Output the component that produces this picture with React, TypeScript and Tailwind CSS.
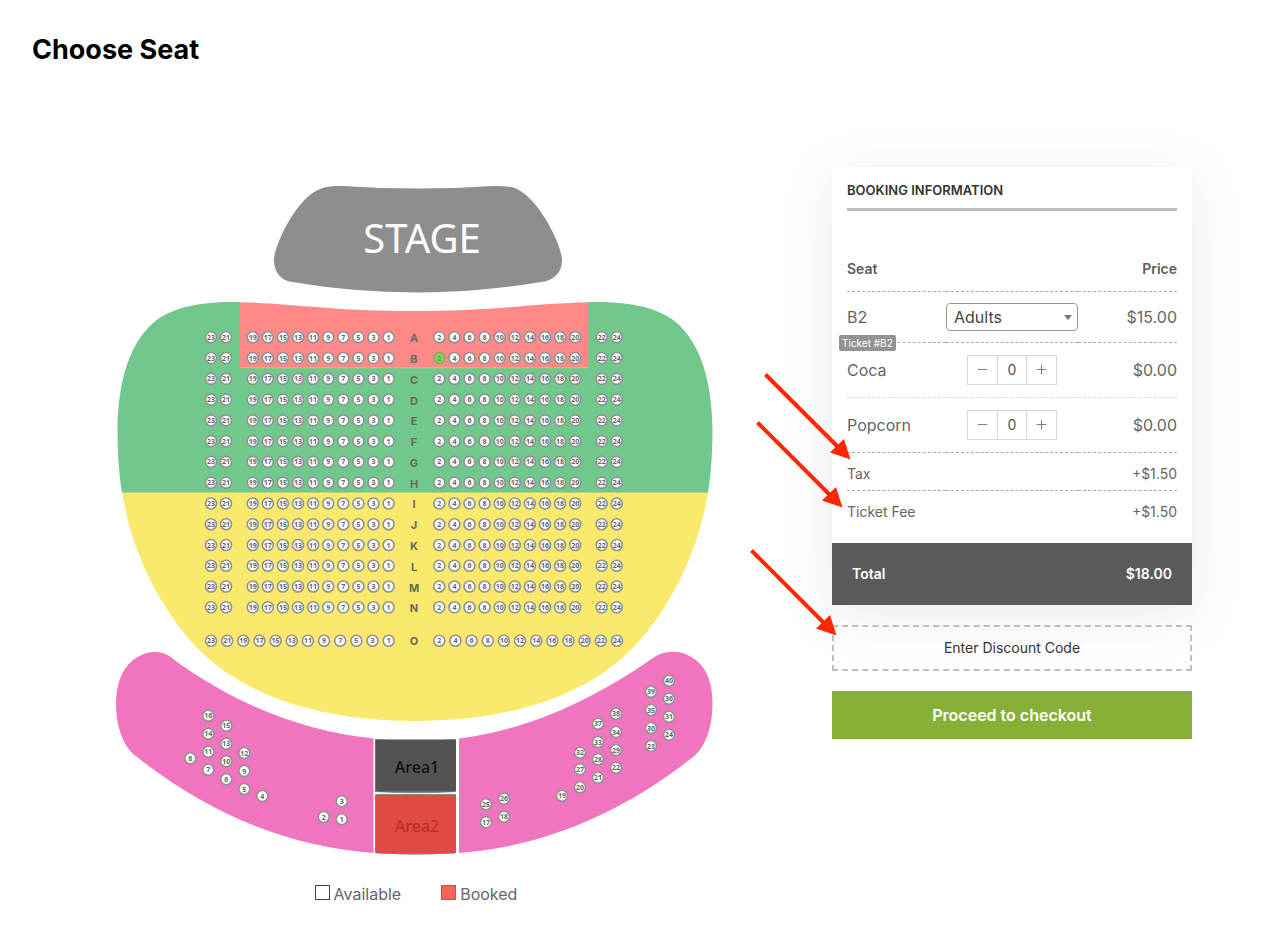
import React, { useState } from 'react';
import { Minus, Plus } from 'lucide-react';

const ROWS = ['A', 'B', 'C', 'D', 'E', 'F', 'G', 'H', 'I', 'J', 'K', 'L', 'M', 'N'];
const ODD = [19, 17, 15, 13, 11, 9, 7, 5, 3, 1];
const EVEN = [2, 4, 6, 8, 10, 12, 14, 16, 18, 20];
const LAST_ROW_Y = 460.7;

// [number, x, y] of the seats on the balcony wings
const BALCONY: [number, number, number][] = [
  [1, 231.7, 639.3], [2, 213.7, 637], [3, 231.7, 621.3], [4, 152.3, 616],
  [5, 134.3, 609], [6, 116.3, 599.3], [7, 98.3, 589.7], [8, 80.3, 578.3],
  [9, 134.3, 591], [10, 116.3, 581.3], [11, 98.3, 571.7], [12, 134.3, 573],
  [13, 116.3, 563.7], [14, 98.3, 553.7], [15, 116.3, 545.7], [16, 98.3, 535.7],
  [17, 376, 642.3], [18, 394, 636.7], [19, 452, 615.7], [20, 470, 607.3],
  [21, 488, 597.7], [22, 506, 587.7], [23, 541, 566], [24, 559, 554.7],
  [25, 376, 624.3], [26, 394, 618.7], [27, 470, 589.3], [28, 488, 579.3],
  [29, 506, 570], [30, 541, 548], [31, 559, 536.7], [32, 470, 572.7],
  [33, 488, 562], [34, 506, 552], [35, 541, 530], [36, 559, 518.7],
  [37, 488, 543.7], [38, 506, 533.7], [39, 541, 511.7], [40, 559, 500.7],
];

interface SeatProps {
  x: number;
  y: number;
  n: number;
  selected?: boolean;
}

function Seat({ x, y, n, selected }: SeatProps) {
  return (
    <g>
      <circle
        cx={x}
        cy={y}
        r={5.5}
        strokeWidth={1.6}
        className={selected ? 'fill-[#97c863] stroke-[#7db352]' : 'fill-white stroke-[#929292]'}
      />
      <text
        x={x}
        y={y + 2.5}
        textAnchor="middle"
        className={selected ? 'text-[7px] font-bold fill-[#6f9b48]' : 'text-[7px] font-bold fill-[#666666]'}
      >
        {n}
      </text>
    </g>
  );
}

function RowLabel({ y, label }: { y: number; label: string }) {
  return (
    <text x={304} y={y + 5} textAnchor="middle" className="font-['Inter'] text-[11px] font-bold fill-[#666b60]">
      {label}
    </text>
  );
}

function SeatMap() {
  return (
    <svg
      viewBox="0 0 612 680"
      role="img"
      aria-label="Seat map"
      className="w-full max-w-[612px] font-['Noto_Sans',sans-serif]"
    >
      <path
        className="fill-[#8e8e8e]"
        d="M233 6 Q308 11 383 6 C395 6 402 6.5 407 9 C430 20 452 66 452 80 C452 95 441 101 431 102 Q308 123 182 102 C172 101 164 93 164 80 C164 66 186 18 210 9 C215 6.5 222 6 233 6 Z"
      />
      <text x={312} y={73} textAnchor="middle" className="text-[40px] fill-white">STAGE</text>

      <path
        className="fill-[#f9e96d]"
        d="M12 312 C21 368 45 419 79 459 C128 516 210 541 305 541 C400 541 482 516 531 459 C565 419 589 368 598 312 Z"
      />
      <path
        className="fill-[#71c88c]"
        d="M130 122 C92 121 60 127 42 144 C20 164 8 200 7.5 250 C7.5 280 10 300 12 312.5 L598 312.5 C600 300 602.5 280 602.5 250 C602 200 590 164 568 144 C550 127 518 121 478 122 L478 187 L130 187 Z"
      />
      <path className="fill-[#ff8889]" d="M129.5 122.3 C180 123 220 131 303 131 C386 131 430 123 478.5 122.3 L478.5 187.5 L129.5 187.5 Z" />
      <path className="fill-none stroke-[#b5cd8b]" d="M129.5 187.8 H478.5" />

      {ROWS.map((row, r) => {
        const y = 157.3 + r * 20.77;
        return (
          <g key={row}>
            <Seat x={101} y={y} n={23} />
            <Seat x={116} y={y} n={21} />
            {ODD.map((n, i) => <Seat key={n} x={142.7 + i * 15.1} y={y} n={n} />)}
            <RowLabel y={y} label={row} />
            {EVEN.map((n, i) => (
              <Seat key={n} x={329.3 + i * 15.1} y={y} n={n} selected={row === 'B' && n === 2} />
            ))}
            <Seat x={491.7} y={y} n={22} />
            <Seat x={506.7} y={y} n={24} />
          </g>
        );
      })}

      {[23, 21, ...ODD].map((n, i) => <Seat key={n} x={101 + i * 16.15} y={LAST_ROW_Y} n={n} />)}
      <RowLabel y={LAST_ROW_Y - 1} label="O" />
      {[...EVEN, 22, 24].map((n, i) => <Seat key={n} x={329.3 + i * 16.15} y={LAST_ROW_Y} n={n} />)}

      <path
        className="fill-[#f174be]"
        d="M263.5 558.5 C190 551 125 523 67 482 C58 474 52 472 44 472 C34 472 24 478 18 485 C10 494 6 508 6 523 C6 548 14 568 27 577 C100 635 180 667 263.5 673 Z"
      />
      <path
        className="fill-[#f174be]"
        d="M349 558.5 C415 550 477 524 546 476 C553 472 558 472 565 472 C575 472 585 478 591 485 C599 494 602.5 508 602.5 523 C602.5 548 595 568 583 577 C510 635 430 667 349 673 Z"
      />
      {BALCONY.map(([n, x, y]) => <Seat key={n} x={x} y={y} n={n} />)}

      <path className="fill-[#8b8b8b]" d="M265 559 Q306 562 346 559 V612 Q306 614.5 265 612 Z" />
      <rect className="fill-[#545454]" x={265.5} y={559.5} width={80.5} height={52} rx={2} />
      <path className="fill-[#8b8b8b]" d="M265 614 H346 V673 Q306 676.5 265 673 Z" />
      <rect className="fill-[#df4b42]" x={265.5} y={615} width={80.5} height={58.5} rx={2} />
      <text x={307} y={593} textAnchor="middle" className="text-[16px] font-medium fill-[#111111]">Area1</text>
      <text x={307} y={652} textAnchor="middle" className="text-[16px] font-medium fill-[#bf2f2a]">Area2</text>
    </svg>
  );
}

function Quantity({ label }: { label: string }) {
  const [count, setCount] = useState(0);

  return (
    <div className="mx-auto flex h-[30px] w-[90px] border border-[#d9d9d9] text-[#777777]">
      <button
        type="button"
        aria-label={`Remove ${label}`}
        onClick={() => setCount(Math.max(0, count - 1))}
        className="flex flex-1 items-center justify-center"
      >
        <Minus size={15} strokeWidth={1.5} />
      </button>
      <input
        type="text"
        aria-label={`${label} quantity`}
        value={count}
        onChange={e => setCount(Number(e.target.value) || 0)}
        className="w-[30px] border-x border-[#d9d9d9] text-center text-sm text-[#555555] outline-none"
      />
      <button
        type="button"
        aria-label={`Add ${label}`}
        onClick={() => setCount(count + 1)}
        className="flex flex-1 items-center justify-center"
      >
        <Plus size={15} strokeWidth={1.5} />
      </button>
    </div>
  );
}

function Arrow({ className }: { className: string }) {
  return (
    <svg viewBox="0 0 88 88" aria-hidden="true" className={`pointer-events-none absolute size-[88px] ${className}`}>
      <path className="stroke-[#ff2600]" strokeWidth={4} d="M1.5 1.5 L76 76" />
      <path className="fill-[#ff2600]" d="M86.5 86.5 L66 79.5 L80 66 Z" />
    </svg>
  );
}

function BookingTable() {
  return (
    <table className="mt-9 w-full table-fixed border-collapse text-[#666666]">
      <colgroup>
        <col />
        <col className="w-[132px]" />
        <col />
      </colgroup>
      <thead>
        <tr className="h-11 border-b border-dashed border-[#aaaaaa] text-sm text-[#5c5c5c]">
          <th className="text-left font-semibold">Seat</th>
          <th></th>
          <th className="text-right font-semibold">Price</th>
        </tr>
      </thead>
      <tbody>
        <tr className="h-[51px] border-b border-dashed border-[#aaaaaa]">
          <td className="relative">
            B2
            <span className="absolute -bottom-[9px] -left-2 rounded-[2px] bg-[#949494] px-[3px] text-[10px] leading-4 whitespace-nowrap text-white">
              Ticket #B2
            </span>
          </td>
          <td>
            <div className="relative">
              <select
                aria-label="Ticket type"
                className="block h-7 w-full appearance-none rounded border border-[#999999] bg-white pl-[7px] text-base leading-6 text-[#444444]"
              >
                <option>Adults</option>
                <option>Children</option>
              </select>
              <svg viewBox="0 0 8 5" aria-hidden="true" className="pointer-events-none absolute top-3 right-[6px] h-[5px] w-2">
                <path className="fill-[#777777]" d="M0 0 H8 L4 5 Z" />
              </svg>
            </div>
          </td>
          <td className="text-right">$15.00</td>
        </tr>
        <tr className="h-[55px] border-b border-dashed border-[#dddddd]">
          <td>Coca</td>
          <td><Quantity label="Coca" /></td>
          <td className="text-right">$0.00</td>
        </tr>
        <tr className="h-[55px] border-b border-dashed border-[#aaaaaa]">
          <td>Popcorn</td>
          <td><Quantity label="Popcorn" /></td>
          <td className="text-right">$0.00</td>
        </tr>
        <tr className="h-[38px] border-b border-dashed border-[#aaaaaa] text-sm *:pt-[6px]">
          <td colSpan={2}>Tax</td>
          <td className="text-right">+$1.50</td>
        </tr>
        <tr className="h-[37px] text-sm *:pt-[6px]">
          <td colSpan={2}>Ticket Fee</td>
          <td className="text-right">+$1.50</td>
        </tr>
      </tbody>
    </table>
  );
}

export default function App() {
  return (
    <div className="bg-white font-['Inter',sans-serif] text-[#666666]">
      <header className="px-8 pt-8">
        <h1 className="text-[27px] leading-9 font-bold text-black">Choose Seat</h1>
      </header>

      <main className="grid grid-cols-[1fr_360px] items-start gap-20 px-20 pt-[99px]">
        <section className="flex flex-col items-center pt-[13px]">
          <SeatMap />
          <ul className="mt-[22px] flex gap-10 leading-6">
            <li className="flex items-center gap-1">
              <span className="mb-1 size-[15px] border border-[#444444]" />
              Available
            </li>
            <li className="flex items-center gap-1">
              <span className="mb-1 size-[15px] border border-[#e8433b] bg-[#f6635b]" />
              Booked
            </li>
          </ul>
        </section>

        <aside className="relative">
          <div className="bg-white shadow-[0_10px_50px_rgba(30,45,80,0.1)]">
            <div className="px-[15px] pb-4">
              <h2 className="border-b-3 border-[#c2c2c2] pt-3 pb-[7px] text-[13px] leading-[22px] font-semibold text-[#333333] uppercase">
                Booking information
              </h2>
              <BookingTable />
            </div>
            <div className="flex h-[62px] items-center justify-between bg-[#5b5b5b] px-5 text-sm font-semibold text-white">
              <span>Total</span>
              <span>$18.00</span>
            </div>
          </div>
          <button
            type="button"
            className="mt-5 h-[46px] w-full border-2 border-dashed border-[#bfbfbf] text-sm text-[#333333]"
          >
            Enter Discount Code
          </button>
          <button type="button" className="mt-5 h-12 w-full bg-[#86b037] text-base font-semibold text-white">
            Proceed to checkout
          </button>
          <Arrow className="top-[206px] -left-[68px]" />
          <Arrow className="top-[254px] -left-[76px]" />
          <Arrow className="top-[382px] -left-[82px]" />
        </aside>
      </main>
    </div>
  );
}
